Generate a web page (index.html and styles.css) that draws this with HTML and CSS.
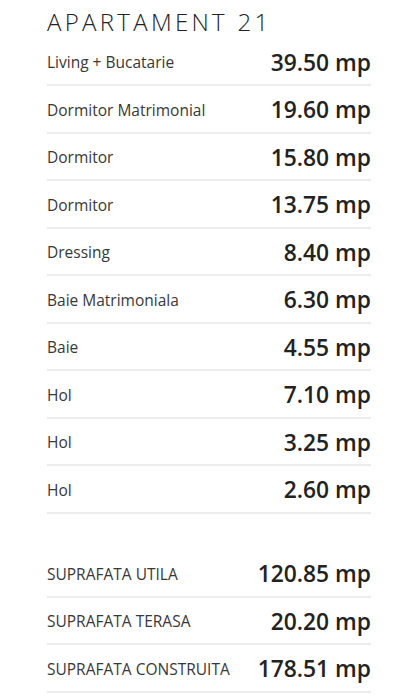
FILE: index.html
```html
<!DOCTYPE html>
<html lang="en">
<head>
  <meta charset="UTF-8">
  <title>Apartament 21</title>
  <link rel="stylesheet" href="styles.css">
</head>
<body>
  <div class="apartment">
    <h1 class="title">APARTAMENT 21</h1>
    <ul class="rooms">
      <li class="row"><span class="label">Living + Bucatarie</span><span class="value">39.50 mp</span></li>
      <li class="row"><span class="label">Dormitor Matrimonial</span><span class="value">19.60 mp</span></li>
      <li class="row"><span class="label">Dormitor</span><span class="value">15.80 mp</span></li>
      <li class="row"><span class="label">Dormitor</span><span class="value">13.75 mp</span></li>
      <li class="row"><span class="label">Dressing</span><span class="value">8.40 mp</span></li>
      <li class="row"><span class="label">Baie Matrimoniala</span><span class="value">6.30 mp</span></li>
      <li class="row"><span class="label">Baie</span><span class="value">4.55 mp</span></li>
      <li class="row"><span class="label">Hol</span><span class="value">7.10 mp</span></li>
      <li class="row"><span class="label">Hol</span><span class="value">3.25 mp</span></li>
      <li class="row"><span class="label">Hol</span><span class="value">2.60 mp</span></li>
    </ul>
    <ul class="rooms totals">
      <li class="row"><span class="label">SUPRAFATA UTILA</span><span class="value">120.85 mp</span></li>
      <li class="row"><span class="label">SUPRAFATA TERASA</span><span class="value">20.20 mp</span></li>
      <li class="row"><span class="label">SUPRAFATA CONSTRUITA</span><span class="value">178.51 mp</span></li>
    </ul>
  </div>
</body>
</html>
```

FILE: styles.css
```css
body {
  margin: 0;
  background: #fff;
  font-family: "Open Sans", Arial, sans-serif;
}
.apartment {
  width: 324px;
  margin-left: 47px;
}
.title {
  margin: 0;
  height: 38.5px;
  font-size: 24px;
  font-weight: 300;
  line-height: 43px;
  letter-spacing: 3.3px;
  color: #222;
  white-space: nowrap;
}
.rooms {
  list-style: none;
  margin: 0;
  padding: 0;
}
.totals {
  margin-top: 36.5px;
}
.row {
  display: flex;
  justify-content: space-between;
  align-items: center;
  height: 45.5px;
  padding-top: 2px;
  box-sizing: border-box;
  height: 47.5px;
  border-bottom: 2px solid #ececec;
}
.label {
  font-size: 15.5px;
  color: #383838;
}
.value {
  font-size: 22.8px;
  font-weight: 600;
  color: #222;
}
```
